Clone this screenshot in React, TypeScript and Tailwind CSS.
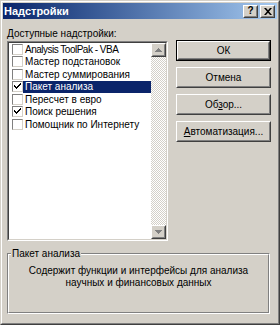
import { ReactNode } from "react"

const items = [
  { label: "Analysis ToolPak - VBA", checked: false, narrow: true },
  { label: "Мастер подстановок", checked: false },
  { label: "Мастер суммирования", checked: false },
  { label: "Пакет анализа", checked: true, selected: true },
  { label: "Пересчет в евро", checked: false },
  { label: "Поиск решения", checked: true },
  { label: "Помощник по Интернету", checked: false },
]

const font = "font-['Liberation_Sans',Arial,sans-serif]"

const Raised = ({ children, className = "" }: { children?: ReactNode; className?: string }) => (
  <div className={`border border-t-white border-l-white border-r-[#404040] border-b-[#404040] bg-[#d4d0c8] ${className}`}>
    <div className="flex h-full w-full items-center justify-center border border-t-[#d4d0c8] border-l-[#d4d0c8] border-r-[#808080] border-b-[#808080]">
      {children}
    </div>
  </div>
)

const CheckBox = ({ checked }: { checked: boolean }) => (
  <span className="flex h-[11px] w-[11px] shrink-0 items-center justify-center border border-t-[#808080] border-l-[#808080] border-r-[#d4d0c8] border-b-[#d4d0c8] bg-white">
    {checked && (
      <svg width="7" height="7" viewBox="0 0 7 7">
        <path d="M0 2h1v1h1v1h1V3h1V2h1V1h1V0h1v2H6v1H5v1H4v1H3v1H2V5H1V4H0z" fill="#000" />
      </svg>
    )}
  </span>
)

const Arrow = ({ up }: { up?: boolean }) => (
  <svg width="7" height="4" viewBox="0 0 7 4" className={up ? "" : "rotate-180"}>
    <path d="M3 0h1v1h1v1h1v1h1v1H0V3h1V2h1V1h1z" fill="#808080" />
  </svg>
)

const Btn = ({ children, def }: { children: ReactNode; def?: boolean }) =>
  def ? (
    <div className="h-[21px] w-[95px] border border-black">
      <Raised className="h-full w-full">
        <span className="text-[10px] text-black">{children}</span>
      </Raised>
    </div>
  ) : (
    <Raised className="h-[21px] w-[95px]">
      <span className="text-[10px] text-black">{children}</span>
    </Raised>
  )

export default function App() {
  return (
    <div className={`h-[325px] w-[280px] border border-t-[#d4d0c8] border-l-[#d4d0c8] border-r-[#404040] border-b-[#404040] bg-[#d4d0c8] ${font}`}>
      <div className="flex h-full w-full flex-col border border-t-white border-l-white border-r-[#808080] border-b-[#808080] p-px">
        {/* title bar */}
        <div className="flex h-[16px] items-center justify-between bg-gradient-to-r from-[#0a246a] to-[#a6caf0] pl-[1px] pr-[2px]">
          <span className="text-[11px] font-bold text-white">Надстройки</span>
          <div className="flex items-center">
            <Raised className="h-[13px] w-[15px]">
              <span className="text-[10px] font-bold leading-none text-black">?</span>
            </Raised>
            <Raised className="ml-[2px] h-[13px] w-[15px]">
              <svg width="8" height="7" viewBox="0 0 8 7">
                <path d="M0 0h2l2 2.3L6 0h2L5 3.5 8 7H6L4 4.7 2 7H0l3-3.5z" fill="#000" />
              </svg>
            </Raised>
          </div>
        </div>

        <div className="flex flex-1 flex-col px-[4px] text-[10px] text-black">
          <div className="flex gap-[8px] pt-[8px]">
            <div className="flex flex-col">
              <div className="whitespace-nowrap leading-[13px]">
                <span className="underline">Д</span>оступные надстройки:
              </div>
              {/* listbox */}
              <div className="mt-[1px] h-[200px] w-[161px] border border-t-[#808080] border-l-[#808080] border-r-white border-b-white">
                <div className="flex h-full border border-t-[#404040] border-l-[#404040] border-r-[#d4d0c8] border-b-[#d4d0c8] bg-white">
                  <div className="flex flex-1 flex-col">
                    {items.map((it) => (
                      <div key={it.label} className="flex h-[12.5px] items-center">
                        <div className="flex w-[14px] shrink-0 pl-[3px]">
                          <CheckBox checked={it.checked} />
                        </div>
                        <div
                          className={`flex h-full flex-1 items-center whitespace-nowrap pl-[2px] ${
                            it.selected ? "bg-[#0a246a] text-white" : ""
                          } ${it.narrow ? "tracking-[-0.5px]" : ""}`}
                        >
                          {it.label}
                        </div>
                      </div>
                    ))}
                  </div>
                  {/* scrollbar */}
                  <div className="flex w-[15px] flex-col bg-[repeating-conic-gradient(#ffffff_0_25%,#d4d0c8_0_50%)] bg-[length:2px_2px]">
                    <Raised className="h-[14px] w-[15px]">
                      <Arrow up />
                    </Raised>
                    <div className="flex-1" />
                    <Raised className="h-[14px] w-[15px]">
                      <Arrow />
                    </Raised>
                  </div>
                </div>
              </div>
            </div>

            <div className="flex flex-col gap-[6px] pt-[13px]">
              <Btn def>ОК</Btn>
              <Btn>Отмена</Btn>
              <Btn>
                Об<span className="underline">з</span>ор...
              </Btn>
              <Btn>
                <span className="underline">А</span>втоматизация...
              </Btn>
            </div>
          </div>

          {/* group box */}
          <div className="relative mt-[12px] h-[61px] w-[263px] border border-t-[#808080] border-l-[#808080] border-r-white border-b-white">
            <div className="h-full w-full border border-t-white border-l-white border-r-[#808080] border-b-[#808080]" />
            <span className="absolute -top-[7px] left-[3px] whitespace-nowrap bg-[#d4d0c8] px-[1px] leading-[13px]">Пакет анализа</span>
            <div className="absolute inset-x-0 top-[11px] text-center leading-[12px]">
              Содержит функции и интерфейсы для анализа
              <br />
              научных и финансовых данных
            </div>
          </div>
        </div>
      </div>
    </div>
  )
}
